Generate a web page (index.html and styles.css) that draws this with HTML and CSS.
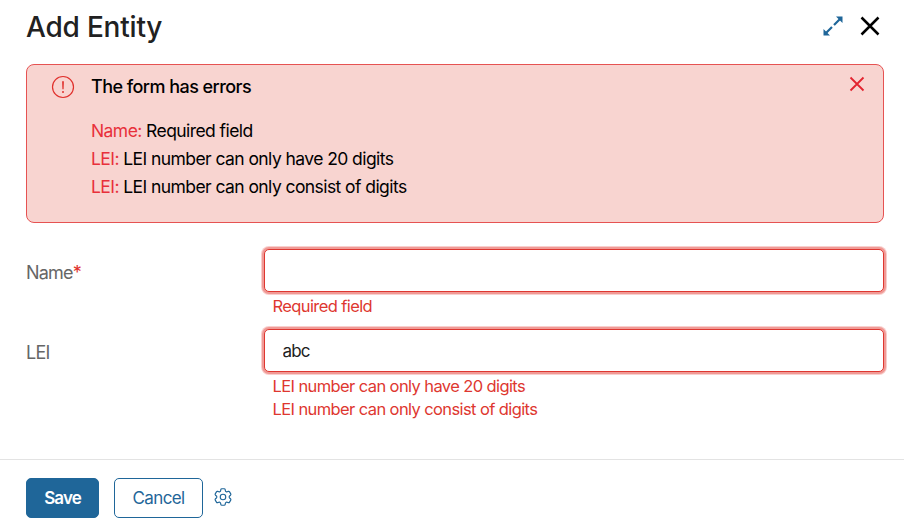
FILE: index.html
```html
<!DOCTYPE html>
<html lang="en">
<head>
<meta charset="utf-8">
<title>Add Entity</title>
<link rel="stylesheet" href="styles.css">
</head>
<body>
<main class="dialog">
  <header class="dialog-header">
    <h1 class="title">Add Entity</h1>
    <div class="window-actions">
      <button class="icon-button expand" type="button" aria-label="Expand">
        <svg width="20" height="20" viewBox="0 0 20 20"><path d="M11 9 17 3M9 11 3 17" fill="none" stroke="currentColor" stroke-width="2.2"/><path d="M13 .5h6.5V7zM.5 13v6.5H7z" fill="currentColor"/></svg>
      </button>
      <button class="icon-button close" type="button" aria-label="Close">
        <svg width="20" height="20" viewBox="0 0 20 20"><path d="m1.5 1.5 17 17m0-17-17 17" fill="none" stroke="currentColor" stroke-width="2.5"/></svg>
      </button>
    </div>
  </header>

  <section class="alert">
    <svg class="alert-icon" width="24" height="24" viewBox="0 0 24 24"><circle cx="12" cy="12" r="10.5" fill="none" stroke="currentColor" stroke-width="1.2"/><path d="M11.1 6.3h1.8l-.3 8h-1.2z" fill="currentColor"/><circle cx="12" cy="17" r="1" fill="currentColor"/></svg>
    <div class="alert-body">
      <h2 class="alert-title">The form has errors</h2>
      <ul class="alert-list">
        <li><span class="field-name">Name:</span> Required field</li>
        <li><span class="field-name">LEI:</span> LEI number can only have 20 digits</li>
        <li><span class="field-name">LEI:</span> LEI number can only consist of digits</li>
      </ul>
    </div>
    <button class="icon-button dismiss" type="button" aria-label="Dismiss">
      <svg width="16" height="16" viewBox="0 0 16 16"><path d="m1.5 1.5 13 13m0-13-13 13" fill="none" stroke="currentColor" stroke-width="1.8"/></svg>
    </button>
  </section>

  <form class="form">
    <div class="row">
      <label class="label" for="name">Name<span class="required">*</span></label>
      <div class="control">
        <input class="input" id="name" type="text">
        <p class="error">Required field</p>
      </div>
    </div>
    <div class="row">
      <label class="label" for="lei">LEI</label>
      <div class="control">
        <input class="input" id="lei" type="text" value="abc">
        <p class="error">LEI number can only have 20 digits</p>
        <p class="error">LEI number can only consist of digits</p>
      </div>
    </div>
  </form>

  <footer class="footer">
    <button class="button save" type="button">Save</button>
    <button class="button cancel" type="button">Cancel</button>
    <button class="icon-button settings" type="button" aria-label="Settings">
      <svg width="22" height="22" viewBox="0 0 24 24" fill="none" stroke="currentColor" stroke-width="1.25" stroke-linejoin="round"><path d="M9.594 3.94c.09-.542.56-.94 1.11-.94h2.593c.55 0 1.02.398 1.11.94l.213 1.281c.063.374.313.686.645.87.074.04.147.083.22.127.325.196.72.257 1.075.124l1.217-.456a1.125 1.125 0 0 1 1.37.49l1.296 2.247a1.125 1.125 0 0 1-.26 1.431l-1.003.827c-.293.241-.438.613-.43.992a7.723 7.723 0 0 1 0 .255c-.008.378.137.75.43.991l1.004.827c.424.35.534.955.26 1.43l-1.298 2.247a1.125 1.125 0 0 1-1.369.491l-1.217-.456c-.355-.133-.75-.072-1.076.124a6.47 6.47 0 0 1-.22.128c-.331.183-.581.495-.644.869l-.213 1.281c-.09.543-.56.94-1.11.94h-2.594c-.55 0-1.019-.398-1.11-.94l-.213-1.281c-.062-.374-.312-.686-.644-.87a6.52 6.52 0 0 1-.22-.127c-.325-.196-.72-.257-1.076-.124l-1.217.456a1.125 1.125 0 0 1-1.369-.49l-1.297-2.247a1.125 1.125 0 0 1 .26-1.431l1.004-.827c.292-.24.437-.613.43-.991a6.932 6.932 0 0 1 0-.255c.007-.38-.138-.751-.43-.992l-1.004-.827a1.125 1.125 0 0 1-.26-1.43l1.297-2.247a1.125 1.125 0 0 1 1.37-.491l1.216.456c.356.133.751.072 1.076-.124.072-.044.146-.086.22-.128.332-.183.582-.495.644-.869l.214-1.28Z"/><circle cx="12" cy="12" r="3"/></svg>
    </button>
  </footer>
</main>
</body>
</html>
```
FILE: styles.css
```css
* {
  box-sizing: border-box;
  margin: 0;
  padding: 0;
}

body {
  background: #fff;
  color: #212121;
  font-family: Inter, sans-serif;
  font-size: 17px;
  letter-spacing: -0.6px;
}

.dialog {
  display: flex;
  flex-direction: column;
  height: 528px;
  overflow: hidden;
}

.dialog-header {
  display: flex;
  justify-content: space-between;
  height: 64px;
  padding: 10px 24px 0 26px;
}

.title {
  font-size: 28px;
  font-weight: 500;
  line-height: 34px;
  letter-spacing: -0.2px;
}

.window-actions {
  display: flex;
  gap: 17px;
  padding-top: 6px;
}

.icon-button {
  display: block;
  height: max-content;
  border: 0;
  background: none;
}

.icon-button svg {
  display: block;
}

.expand,
.settings {
  color: #1f6699;
}

.close {
  color: #000;
}

.alert {
  display: flex;
  height: 159px;
  margin: 0 20px 0 26px;
  padding: 0 18.5px 0 24px;
  border: 1px solid #e65252;
  border-radius: 8px;
  background: #f8d4d0;
  color: #000;
}

.alert-icon {
  margin-top: 10px;
  color: #e0302c;
}

.alert-body {
  flex: 1;
  padding: 8px 0 0 16px;
}

.alert-title {
  font-size: 18px;
  font-weight: 500;
  line-height: 28px;
  letter-spacing: -0.55px;
}

.alert-list {
  margin-top: 16px;
  font-size: 17.5px;
  line-height: 28px;
  letter-spacing: -0.57px;
  list-style: none;
}

.field-name {
  color: #e8303a;
}

.dismiss {
  padding-top: 11px;
  color: #e3242f;
}

.form {
  flex: 1;
  padding: 26px 20px 0 26px;
}

.row {
  display: grid;
  grid-template-columns: 238px 1fr;
  min-height: 80px;
}

.label {
  padding-top: 10px;
  color: #666;
  font-size: 18px;
  line-height: 28px;
  letter-spacing: -0.8px;
}

.required {
  color: #e0302c;
}

.input {
  display: block;
  width: 100%;
  height: 43px;
  margin-bottom: 3px;
  padding: 0 17.5px;
  border: 1px solid #de3730;
  border-radius: 5px;
  outline: 0;
  background: #fff;
  box-shadow: 0 0 0 2px #f09a96, 0 0 0 3px #f9cfcd;
  color: #212121;
  font: inherit;
  letter-spacing: -0.8px;
}

.error {
  padding-left: 8.5px;
  color: #de3730;
  font-size: 16.5px;
  line-height: 23px;
}

.footer {
  display: flex;
  height: 69px;
  padding: 18px 26px 0;
  border-top: 1px solid #e3e3e3;
}

.button {
  height: 40px;
  border: 1px solid #1f6699;
  border-radius: 5px;
  font: inherit;
  letter-spacing: inherit;
}

.save {
  width: 73px;
  margin-right: 15px;
  background: #1f6699;
  color: #fff;
  font-weight: 600;
  letter-spacing: -0.9px;
}

.cancel {
  width: 89px;
  margin-right: 9px;
  background: #fff;
  color: #1f6699;
}

.settings {
  padding-top: 8px;
}
```
